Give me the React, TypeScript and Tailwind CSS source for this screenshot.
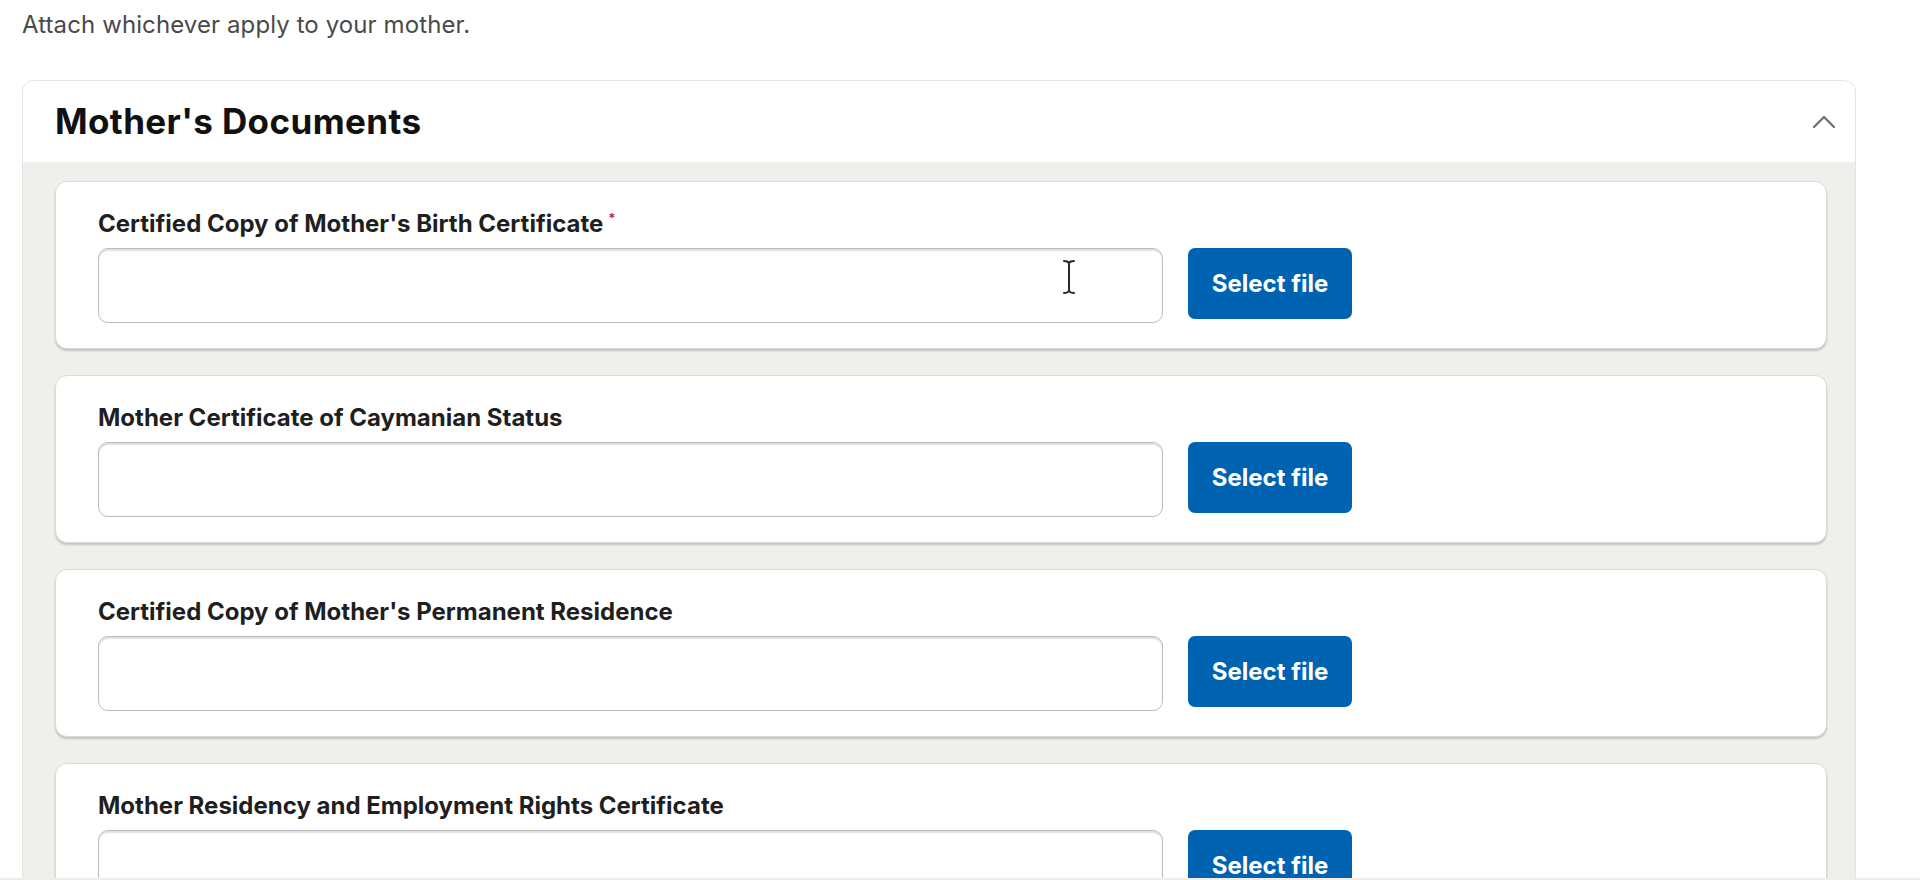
import React from 'react';
import { ChevronUp } from 'lucide-react';

const documents = [
  { id: 1, label: "Certified Copy of Mother's Birth Certificate", required: true, cursor: true },
  { id: 2, label: 'Mother Certificate of Caymanian Status', required: false, cursor: false },
  { id: 3, label: "Certified Copy of Mother's Permanent Residence", required: false, cursor: false },
  { id: 4, label: 'Mother Residency and Employment Rights Certificate', required: false, cursor: false },
];

function TextCursor() {
  return (
    <svg className="absolute left-[962px] top-[10px]" width="16" height="36" viewBox="0 0 16 36" fill="none">
      <path d="M3 2c2 0 4 .5 5 2 1-1.5 3-2 5-2M8 4v28M3 34c2 0 4-.5 5-2 1 1.5 3 2 5 2" stroke="#2b2b2b" strokeWidth="2" strokeLinecap="round" />
    </svg>
  );
}

function DocumentUpload({ doc }: { doc: (typeof documents)[number] }) {
  return (
    <div className="h-[168px] rounded-[12px] border border-[#d9d9d6] bg-white pl-[42px] pt-[28px] shadow-[0_2px_2px_rgba(0,0,0,0.18)]">
      <label className="flex h-[28px] items-center text-[24px] font-bold leading-[28px] text-[#1f1f1f]">
        {doc.label}
        {doc.required && <span className="-mt-[12px] ml-[5px] text-[13px] text-[#d6204e]">*</span>}
      </label>
      <div className="mt-[10px] flex items-start gap-[25px]">
        <div className="relative h-[75px] w-[1065px] rounded-[10px] border border-[#bdbdbd] bg-white shadow-[inset_0_2px_1px_rgba(0,0,0,0.12)]">
          {doc.cursor && <TextCursor />}
        </div>
        <button className="h-[71px] w-[164px] rounded-[7px] bg-[#0063b1] text-[24px] font-bold text-white">
          Select file
        </button>
      </div>
    </div>
  );
}

export default function App() {
  return (
    <div className="min-h-screen bg-white pl-[22px] pt-[12px] font-['Inter','Liberation_Sans',sans-serif]">
      <p className="text-[24px] leading-[26px] tracking-[0.1px] text-[#4a4a4a]">Attach whichever apply to your mother.</p>

      <div className="mt-[42px] w-[1834px] overflow-hidden rounded-t-[12px] border border-[#e4e4e4] bg-white">
        <div className="flex h-[81px] items-center justify-between pl-[32px] pr-[11px]">
          <h2 className="text-[35px] font-bold tracking-[0.4px] text-[#111]">Mother's Documents</h2>
          <ChevronUp size={40} strokeWidth={1.4} className="text-[#707070]" />
        </div>
        <div className="flex flex-col gap-[26px] bg-[#efefeb] pb-[26px] pl-[32px] pr-[28px] pt-[19px]">
          {documents.map(doc => (
            <DocumentUpload key={doc.id} doc={doc} />
          ))}
        </div>
      </div>

      <div className="fixed bottom-0 left-0 h-[2px] w-full bg-[#f3ece3]" />
    </div>
  );
}
